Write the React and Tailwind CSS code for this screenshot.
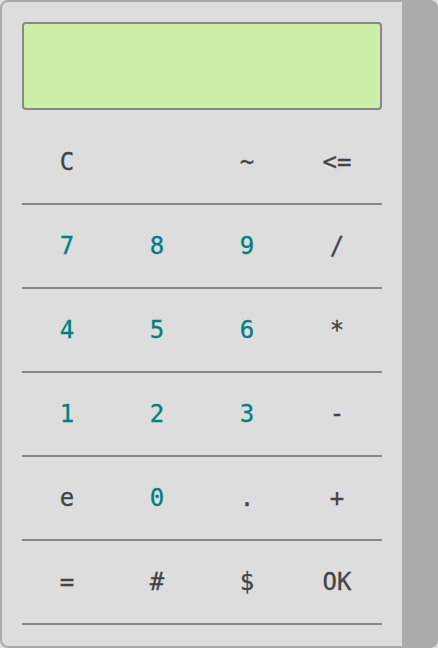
const rows = [
  ["C", "", "~", "<="],
  ["7", "8", "9", "/"],
  ["4", "5", "6", "*"],
  ["1", "2", "3", "-"],
  ["e", "0", ".", "+"],
  ["=", "#", "$", "OK"],
];

const isDigit = (k) => /^[0-9]$/.test(k);

export default function App() {
  return (
    <div className="w-[438px] h-[648px] bg-[#dddddd]">
      <div
        className="w-full h-full bg-[#dddddd] border-2 border-[#aaaaaa] border-r-[36px] rounded-[8px] px-[20px] pt-[20px]"
        style={{ fontFamily: '"DejaVu Sans Mono", monospace' }}
      >
        {/* display */}
        <div className="h-[88px] bg-[#cdeea8] border-2 border-[#888888] rounded-[4px]"></div>

        {/* keypad */}
        <div className="mt-[11px]">
          {rows.map((row, i) => (
            <div key={i} className="grid grid-cols-4 h-[84px] border-b-2 border-[#888888]">
              {row.map((k, j) => (
                <button
                  key={j}
                  className={`flex items-center justify-center text-[24px] [-webkit-text-stroke:0.3px_currentColor] ${
                    isDigit(k) ? "text-[#008080]" : "text-[#444444]"
                  }`}
                >
                  {k}
                </button>
              ))}
            </div>
          ))}
        </div>
      </div>
    </div>
  );
}
